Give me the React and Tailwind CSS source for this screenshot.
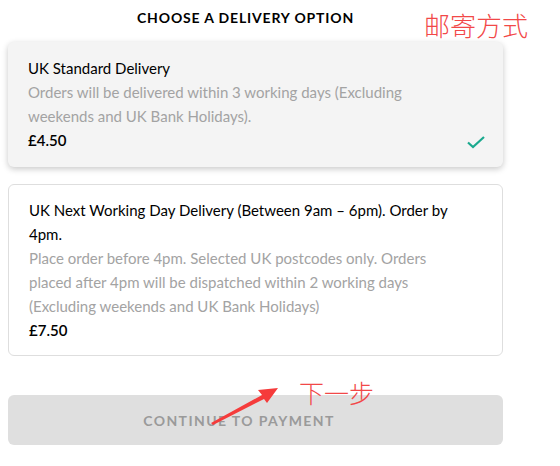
import React from "react";

const cjk = { fontFamily: '"Noto Sans CJK SC", sans-serif' };

function Check() {
  return (
    <svg width="20" height="14" viewBox="0 0 20 14" className="text-[#1aa98e]">
      <path d="M2 7.5 L7 12 L18 2" fill="none" stroke="currentColor" strokeWidth="2.2" />
    </svg>
  );
}

export default function App() {
  return (
    <div className="relative w-[560px] h-[466px] bg-white font-['Lato',sans-serif] text-black">
      <div className="w-[511px] pl-[8px] pr-[8px]">
        <div className="flex h-[42px] pl-[129px] pt-[10px]">
          <h2 className="text-[14px] font-bold tracking-[0.06em] leading-[16px]">CHOOSE A DELIVERY OPTION</h2>
        </div>

        <div className="rounded-md bg-[#f4f4f4] shadow-[0_2px_6px_rgba(0,0,0,0.22)] px-5 pt-[14px] pb-[15px]">
          <p className="text-[15px] leading-6">UK Standard Delivery</p>
          <p className="max-w-[405px] text-[15px] leading-6 text-[#a3a3a3]">
            Orders will be delivered within 3 working days (Excluding weekends and UK Bank Holidays).
          </p>
          <div className="flex items-center justify-between">
            <p className="text-[15px] leading-6 font-semibold">£4.50</p>
            <div className="mr-[-3px] pt-[4px]">
              <Check />
            </div>
          </div>
        </div>

        <div className="mt-[17px] rounded-md border border-[#dedede] bg-white px-5 pt-[13px] pb-[13px] pr-[28px]">
          <p className="max-w-[420px] text-[15px] leading-6">
            UK Next Working Day Delivery (Between 9am – 6pm). Order by 4pm.
          </p>
          <p className="text-[15px] leading-6 text-[#a3a3a3] pr-[10px]">
            Place order before 4pm. Selected UK postcodes only. Orders placed after 4pm will be dispatched within 2 working days (Excluding weekends and UK Bank Holidays)
          </p>
          <p className="text-[15px] leading-6 font-semibold">£7.50</p>
        </div>

        <button className="mt-[39px] flex h-[50px] w-full items-center justify-center rounded-md bg-[#dfdfdf] pr-[33px] text-[14px] font-bold tracking-[0.1em] text-[#9a9a9a]">
          CONTINUE TO PAYMENT
        </button>
      </div>

      <div className="absolute left-[424px] top-[7px] text-[26px] font-light leading-[36px] text-[#f24848]" style={cjk}>
        邮寄方式
      </div>
      <div className="absolute left-[299px] top-[375px] text-[25px] font-light leading-[34px] text-[#f24848]" style={cjk}>
        下一步
      </div>
      <svg className="absolute left-0 top-0" width="560" height="466">
        <path d="M211 423 L262 395 L258 390 L278 388 L267 403 L264 399 L213 425 Z" fill="#f53b3b" />
      </svg>
    </div>
  );
}
